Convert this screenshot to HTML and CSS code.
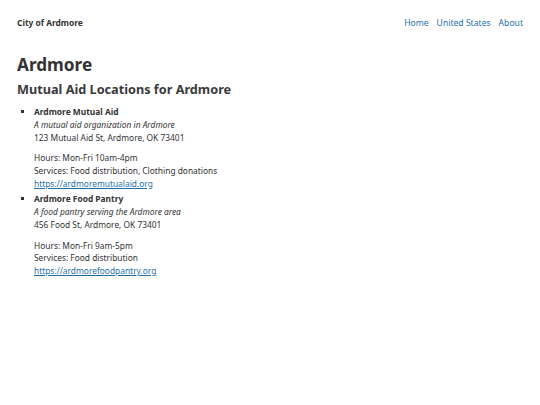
FILE: index.html
```html
<!DOCTYPE html>
<html>
<head>
<meta charset="utf-8">
<link rel="stylesheet" href="styles.css">
</head>
<body>
<header class="site-header">
  <div class="brand">City of Ardmore</div>
  <nav class="nav">
    <a href="#">Home</a>
    <a href="#">United States</a>
    <a href="#">About</a>
  </nav>
</header>
<main class="content">
  <h1 class="title">Ardmore</h1>
  <h2 class="subtitle">Mutual Aid Locations for Ardmore</h2>
  <ul class="orgs">
    <li class="org">
      <div class="org-name">Ardmore Mutual Aid</div>
      <div class="org-desc">A mutual aid organization in Ardmore</div>
      <div class="org-addr">123 Mutual Aid St, Ardmore, OK 73401</div>
      <div class="org-details">
        <div>Hours: Mon-Fri 10am-4pm</div>
        <div>Services: Food distribution, Clothing donations</div>
        <a href="#">https://ardmoremutualaid.org</a>
      </div>
    </li>
    <li class="org">
      <div class="org-name">Ardmore Food Pantry</div>
      <div class="org-desc">A food pantry serving the Ardmore area</div>
      <div class="org-addr">456 Food St, Ardmore, OK 73401</div>
      <div class="org-details">
        <div>Hours: Mon-Fri 9am-5pm</div>
        <div>Services: Food distribution</div>
        <a href="#">https://ardmorefoodpantry.org</a>
      </div>
    </li>
  </ul>
</main>
</body>
</html>
```

FILE: styles.css
```css
html, body {
  margin: 0;
  padding: 0;
  background: #fff;
}
body {
  font-family: "Noto Sans", "Open Sans", sans-serif;
  color: #333;
  font-size: 8.4px;
  line-height: 12.8px;
  padding: 0 17px;
}
.site-header {
  display: flex;
  justify-content: space-between;
  align-items: center;
  height: 46px;
}
.brand {
  font-weight: 700;
  font-size: 8.4px;
}
.nav {
  display: flex;
  gap: 8px;
}
.nav a {
  color: #1f70a8;
  text-decoration: none;
  font-size: 8.6px;
}
.title {
  margin: 7px 0 0;
  font-size: 17.2px;
  line-height: 24px;
  font-weight: 700;
}
.subtitle {
  margin: 2px 0 0;
  font-size: 12.7px;
  line-height: 20px;
  font-weight: 700;
  color: #3a3a3a;
}
.orgs {
  margin: 7px 0 0;
  padding-left: 17px;
  list-style: square;
}
.org {
  margin-bottom: 2.5px;
}
.org-name {
  font-weight: 700;
}
.org-desc {
  font-style: italic;
}
.org-details {
  margin-top: 8px;
}
.org-details a {
  color: #1f70a8;
  text-decoration: underline;
}
```
